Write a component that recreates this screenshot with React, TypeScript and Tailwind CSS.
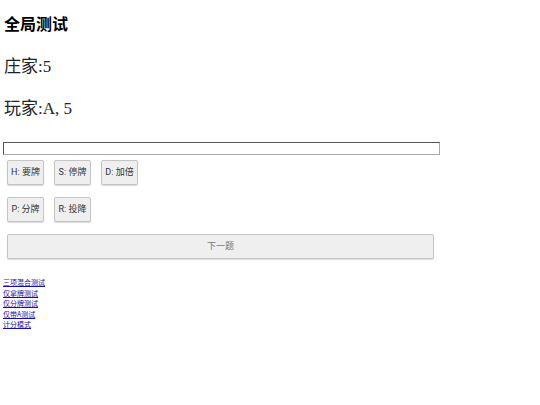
import React from "react";

const actions = [
  [
    { key: "H", label: "要牌" },
    { key: "S", label: "停牌" },
    { key: "D", label: "加倍" },
  ],
  [
    { key: "P", label: "分牌" },
    { key: "R", label: "投降" },
  ],
];

const links = ["三项混合测试", "仅拿牌测试", "仅分牌测试", "仅带A测试", "计分模式"];

export default function App() {
  return (
    <div className="min-h-[405px] w-[540px] bg-white px-[3px] pt-[13px] text-black [font-family:'Liberation_Serif','Noto_Sans_CJK_SC',serif]">
      <h1 className="pl-[1px] text-[16px] leading-[20px] font-bold [font-family:'Noto_Sans_CJK_SC',sans-serif]">全局测试</h1>

      <p className="mt-[23px] pl-[1px] text-[17px] leading-[22px] text-[#222]">庄家:5</p>
      <p className="mt-[20px] pl-[1px] text-[17px] leading-[22px] text-[#222]">玩家:A, 5</p>

      <input
        type="text"
        className="mt-[22px] block h-[13px] w-[437px] border border-t-[#555] border-l-[#555] border-r-[#aaa] border-b-[#aaa] bg-white"
      />

      <div className="mt-[5px] flex flex-col gap-[12px] pl-[4px] [font-family:'Roboto','Noto_Sans_CJK_SC',sans-serif]">
        {actions.map((row, i) => (
          <div key={i} className="flex gap-[10px]">
            {row.map((a) => (
              <button
                key={a.key}
                type="button"
                className="h-[25px] w-[37px] rounded-[2px] border border-[#c4c4c4] bg-[#efefef] text-[9px] text-[#333] shadow-[0_1px_1px_rgba(0,0,0,0.15)]"
              >
                {a.key}: {a.label}
              </button>
            ))}
          </div>
        ))}

        <button
          type="button"
          className="h-[25px] w-[427px] rounded-[2px] border border-[#c4c4c4] bg-[#efefef] text-[9px] text-[#777] shadow-[0_1px_1px_rgba(0,0,0,0.15)]"
        >
          下一题
        </button>
      </div>

      <div className="mt-[18px] flex flex-col [font-family:'Noto_Sans_CJK_SC',sans-serif]">
        {links.map((l) => (
          <a key={l} href="#" className="w-fit text-[7px] leading-[10.5px] text-[#1a0dab] underline">
            {l}
          </a>
        ))}
      </div>
    </div>
  );
}
